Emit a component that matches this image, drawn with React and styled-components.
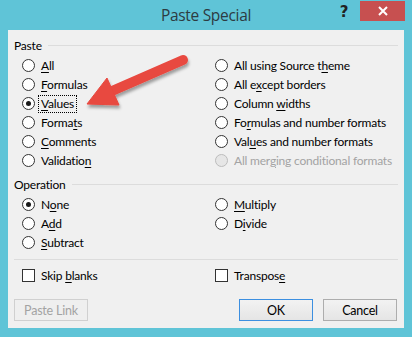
import React from 'react';
import styled, { createGlobalStyle } from 'styled-components';

const GlobalStyle = createGlobalStyle`
  html, body {
    margin: 0;
    padding: 0;
    background: #5fc4d7;
  }
  body {
    font-family: Lato, "Noto Sans", sans-serif;
  }
`;

const Window = styled.div`
  position: relative;
  width: 412px;
  height: 337px;
  background: #5fc4d7;
  display: flex;
  flex-direction: column;
  box-sizing: border-box;
`;

const TitleBar = styled.div`
  height: 30px;
  display: grid;
  grid-template-columns: 1fr auto 1fr;
  align-items: start;
`;

const Title = styled.div`
  grid-column: 2;
  font-family: "Open Sans", sans-serif;
  font-size: 15.5px;
  color: #2d3b42;
  line-height: 30px;
  letter-spacing: -0.3px;
`;

const Controls = styled.div`
  grid-column: 3;
  justify-self: end;
  display: flex;
  align-items: flex-start;
  padding-right: 7px;
  padding-top: 1px;
`;

const HelpButton = styled.div`
  width: 28px;
  font-family: "DejaVu Sans", sans-serif;
  font-weight: bold;
  font-size: 15px;
  color: #222;
  text-align: center;
  line-height: 22px;
  margin-right: 2px;
`;

const CloseButton = styled.div`
  width: 45px;
  height: 20px;
  background: #c75050;
  display: flex;
  align-items: center;
  justify-content: center;
`;

const Panel = styled.div`
  flex: 1;
  margin: 0 8px 9px 8px;
  background: #f0f0f0;
  padding: 0 6px;
  display: flex;
  flex-direction: column;
  font-size: 12px;
  letter-spacing: -0.2px;
  color: #000;
`;

const GroupHeader = styled.div`
  display: flex;
  align-items: center;
  gap: 6px;
  height: 14px;
  margin-top: ${({ $top }) => $top}px;
`;

const GroupLine = styled.div`
  flex: 1;
  height: 1px;
  background: #dcdcdc;
`;

const Options = styled.div`
  display: grid;
  grid-template-columns: 193px 1fr;
  grid-auto-rows: 19px;
  padding-left: 8px;
  margin-top: ${({ $top }) => $top}px;
`;

const Option = styled.label`
  display: flex;
  align-items: center;
  gap: 5px;
  grid-column: ${({ $col }) => $col};
  color: ${({ $disabled }) => ($disabled ? '#a3a3a3' : '#000')};
  white-space: nowrap;
`;

const Radio = styled.span`
  width: 13px;
  height: 13px;
  box-sizing: border-box;
  border-radius: 50%;
  border: 1px solid ${({ $disabled }) => ($disabled ? '#bcbcbc' : '#333')};
  background: ${({ $disabled }) => ($disabled ? '#e6e6e6' : '#fff')};
  display: flex;
  align-items: center;
  justify-content: center;
  flex: none;

  &::after {
    content: '';
    display: ${({ $checked }) => ($checked ? 'block' : 'none')};
    width: 5px;
    height: 5px;
    border-radius: 50%;
    background: #1a1a1a;
  }
`;

const Checkbox = styled.span`
  width: 13px;
  height: 13px;
  box-sizing: border-box;
  border: 1px solid #333;
  background: #fff;
  flex: none;
`;

const Text = styled.span`
  padding: 1px 2px;
  margin-left: -2px;
  border: 1px ${({ $focus }) => ($focus ? 'dotted #000' : 'solid transparent')};
  line-height: 14px;

  u {
    text-decoration: underline;
    text-underline-offset: 2px;
  }
`;

const Separator = styled.div`
  height: 1px;
  background: #dcdcdc;
  margin-top: 7px;
`;

const ButtonRow = styled.div`
  display: flex;
  align-items: center;
  margin-top: 14px;
`;

const Button = styled.div`
  width: 74px;
  height: 22px;
  box-sizing: border-box;
  display: flex;
  align-items: center;
  justify-content: center;
  font-size: 12.5px;
  border: 1px solid ${({ $variant }) =>
    $variant === 'default' ? '#3c8fe0' : $variant === 'disabled' ? '#d0d0d0' : '#adadad'};
  background: ${({ $variant }) =>
    $variant === 'disabled' ? '#efefef' : 'linear-gradient(#f2f2f2, #e5e5e5)'};
  color: ${({ $variant }) => ($variant === 'disabled' ? '#a3a3a3' : '#000')};
  margin-left: ${({ $gap }) => $gap || 0}px;
`;

const Spacer = styled.div`
  flex: 1;
`;

const ArrowOverlay = styled.svg`
  position: absolute;
  left: 80px;
  top: 50px;
  pointer-events: none;
`;

const RadioOption = ({ col, checked, disabled, focus, children }) => (
  <Option $col={col} $disabled={disabled}>
    <Radio $checked={checked} $disabled={disabled} />
    <Text $focus={focus}>{children}</Text>
  </Option>
);

const CheckOption = ({ col, children }) => (
  <Option $col={col}>
    <Checkbox />
    <Text>{children}</Text>
  </Option>
);

const pasteLeft = [
  [<><u>A</u>ll</>],
  [<><u>F</u>ormulas</>],
  [<><u>V</u>alues</>, true],
  [<>Forma<u>t</u>s</>],
  [<><u>C</u>omments</>],
  [<>Validatio<u>n</u></>],
];

const pasteRight = [
  [<>All using Source t<u>h</u>eme</>],
  [<>All e<u>x</u>cept borders</>],
  [<>Column <u>w</u>idths</>],
  [<>Fo<u>r</u>mulas and number formats</>],
  [<>Val<u>u</u>es and number formats</>],
  [<>All mer<u>g</u>ing conditional formats</>, false, true],
];

export default function App() {
  return (
    <>
      <GlobalStyle />
      <Window>
        <TitleBar>
          <Title>Paste Special</Title>
          <Controls>
            <HelpButton>?</HelpButton>
            <CloseButton>
              <svg width="10" height="10" viewBox="0 0 10 10">
                <path d="M1 1 L9 9 M9 1 L1 9" stroke="#fff" strokeWidth="2" />
              </svg>
            </CloseButton>
          </Controls>
        </TitleBar>

        <Panel>
          <GroupHeader $top={8}>
            <span>Paste</span>
            <GroupLine />
          </GroupHeader>
          <Options $top={4}>
            {pasteLeft.map(([label, checked], i) => (
              <React.Fragment key={i}>
                <RadioOption col={1} checked={checked} focus={checked}>
                  {label}
                </RadioOption>
                <RadioOption col={2} disabled={pasteRight[i][2]}>
                  {pasteRight[i][0]}
                </RadioOption>
              </React.Fragment>
            ))}
          </Options>

          <GroupHeader $top={7}>
            <span>Operation</span>
            <GroupLine />
          </GroupHeader>
          <Options $top={4}>
            <RadioOption col={1} checked>N<u>o</u>ne</RadioOption>
            <RadioOption col={2}><u>M</u>ultiply</RadioOption>
            <RadioOption col={1}>A<u>d</u>d</RadioOption>
            <RadioOption col={2}>D<u>i</u>vide</RadioOption>
            <RadioOption col={1}><u>S</u>ubtract</RadioOption>
          </Options>

          <Separator />

          <Options $top={6}>
            <CheckOption col={1}>Skip <u>b</u>lanks</CheckOption>
            <CheckOption col={2}>Transpos<u>e</u></CheckOption>
          </Options>

          <ButtonRow>
            <Button $variant="disabled"><span>Paste Link</span></Button>
            <Spacer />
            <Button $variant="default">OK</Button>
            <Button $gap={10}>Cancel</Button>
            <div style={{ width: 1 }} />
          </ButtonRow>
        </Panel>

        <ArrowOverlay width="112" height="72" viewBox="0 0 112 72">
          <defs>
            <filter id="arrowShadow" x="-20%" y="-20%" width="150%" height="160%">
              <feDropShadow dx="1" dy="3" stdDeviation="1.6" floodColor="#000" floodOpacity="0.35" />
            </filter>
          </defs>
          <g filter="url(#arrowShadow)" fill="#e8483f" stroke="#e8483f">
            <line x1="103" y1="10" x2="32" y2="41" strokeWidth="10" strokeLinecap="round" />
            <polygon points="7,54 27,28 39,55" strokeWidth="1" strokeLinejoin="round" />
          </g>
        </ArrowOverlay>
      </Window>
    </>
  );
}
